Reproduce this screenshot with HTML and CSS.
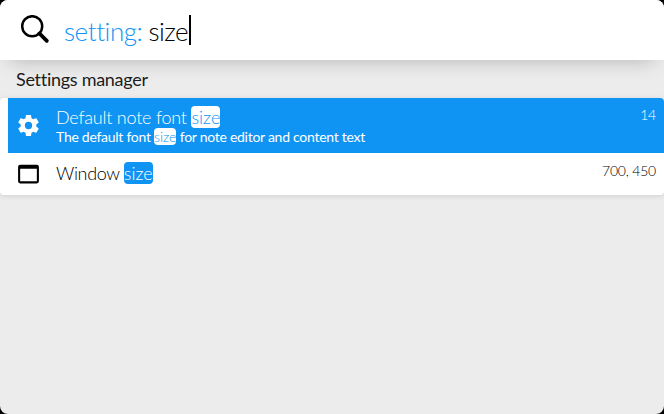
FILE: index.html
```html
<!DOCTYPE html>
<html lang="en">
<head>
<meta charset="utf-8">
<title>Settings manager</title>
<link rel="stylesheet" href="styles.css">
</head>
<body>
<main class="window">
  <header class="search">
    <svg class="search-icon" viewBox="0 0 30 30"><circle cx="12.2" cy="11.2" r="10" fill="none" stroke="currentColor" stroke-width="2.5"/><path d="M19.5 18.5l7.300 7.300" stroke="currentColor" stroke-width="3.8" stroke-linecap="round"/></svg>
    <div class="query"><span class="prefix">setting:</span> <span class="term">size</span><span class="caret"></span></div>
  </header>
  <h2 class="heading">Settings manager</h2>
  <ul class="results">
    <li class="row selected">
      <svg class="icon" viewBox="0 0 24 24"><path fill="currentColor" d="M12 15.5A3.5 3.5 0 0 1 8.500 12 3.500 3.500 0 0 1 12 8.500a3.500 3.500 0 0 1 3.500 3.500 3.500 3.500 0 0 1-3.500 3.500m7.430-2.530c.04-.32.07-.64.07-.97s-.03-.66-.07-1l2.110-1.630c.19-.15.24-.42.12-.64l-2-3.460c-.12-.22-.39-.31-.61-.22l-2.490 1c-.52-.39-1.060-.73-1.690-.98l-.37-2.650A.506.506 0 0 0 14 2h-4c-.25 0-.46.18-.5.42l-.37 2.650c-.63.25-1.170.59-1.690.98l-2.490-1c-.22-.09-.49 0-.61.22l-2 3.460c-.13.22-.07.49.12.64L4.570 11c-.04.34-.07.67-.07 1s.03.65.07.97l-2.110 1.660c-.19.15-.25.42-.12.64l2 3.460c.12.22.39.3.61.22l2.490-1.010c.52.4 1.060.74 1.690.99l.37 2.650c.04.24.25.42.5.42h4c.25 0 .46-.18.5-.42l.37-2.650c.63-.26 1.170-.59 1.690-.99l2.490 1.010c.22.08.49 0 .61-.22l2-3.460c.12-.22.07-.49-.12-.64l-2.110-1.660z"/></svg>
      <div class="text"><div class="title">Default note font <mark>size</mark></div><div class="desc">The default font <mark>size</mark> for note editor and content text</div></div>
      <div class="value">14</div>
    </li>
    <li class="row">
      <svg class="icon" viewBox="0 0 24 24"><path fill="currentColor" d="M20 3.500H4a2 2 0 0 0-2 2v14a2 2 0 0 0 2 2h16a2 2 0 0 0 2-2v-14a2 2 0 0 0-2-2zm0 16H4V7.500h16v12z"/></svg>
      <div class="text"><div class="title window-title">Window <mark>size</mark></div></div>
      <div class="value">700, 450</div>
    </li>
  </ul>
</main>
</body>
</html>
```
FILE: styles.css
```css
* { box-sizing: border-box; }
body { margin: 0; background: #000; font-family: Lato, sans-serif; font-weight: 300; color: #000; }
.window { height: 414px; background: #ececec; border-radius: 8px; overflow: hidden; }
.search { height: 60px; background: #fff; display: flex; align-items: center; padding-left: 20px; box-shadow: 0 10px 20px -10px rgba(0,0,0,.25); }
.search-icon { width: 30px; height: 30px; margin-right: 14px; }
.query { font-size: 26px; line-height: 32px; display: flex; white-space: pre; align-items: center; letter-spacing: -.45px; padding-top: 1px; }
.term { letter-spacing: -.5px; margin-left: 6px; }
.prefix { color: #1094f4; }
.caret { width: 2px; height: 30px; background: #000; margin: -2px 0 0 .6px; }
.heading { margin: 0; padding: 7px 16px 0; height: 38px; font-size: 18px; line-height: 24px; font-weight: 400; letter-spacing: -.28px; color: #1c1c1c; }
.results { margin: 0; padding: 0; list-style: none; background: #fff; border-radius: 4px; overflow: hidden; box-shadow: 0 1px 5px rgba(0,0,0,.12); }
.row { display: flex; margin-left: 8px; height: 42px; padding: 8px 8px 0; }
.selected { height: 55px; background: #1094f4; color: #fff; }
.icon { width: 25px; height: 25px; margin-right: 15px; }
.selected .icon { margin-top: 7px; }
.text { flex: 1; }
.selected .text { margin-top: -1px; }
.title { font-size: 18px; line-height: 24px; letter-spacing: -.22px; }
.window-title { letter-spacing: -.35px; }
.desc { font-size: 14px; line-height: 16px; font-weight: 400; letter-spacing: -.27px; }
mark { background: #1094f4; color: #fff; border-radius: 4px; letter-spacing: 0; }
.desc mark { font-weight: 300; }
.selected mark { background: #fff; color: #1094f4; }
.value { font-size: 14px; line-height: 18px; letter-spacing: -.2px; }
.window-title + .value, .row:last-child .value { padding-top: 1px; }
```
